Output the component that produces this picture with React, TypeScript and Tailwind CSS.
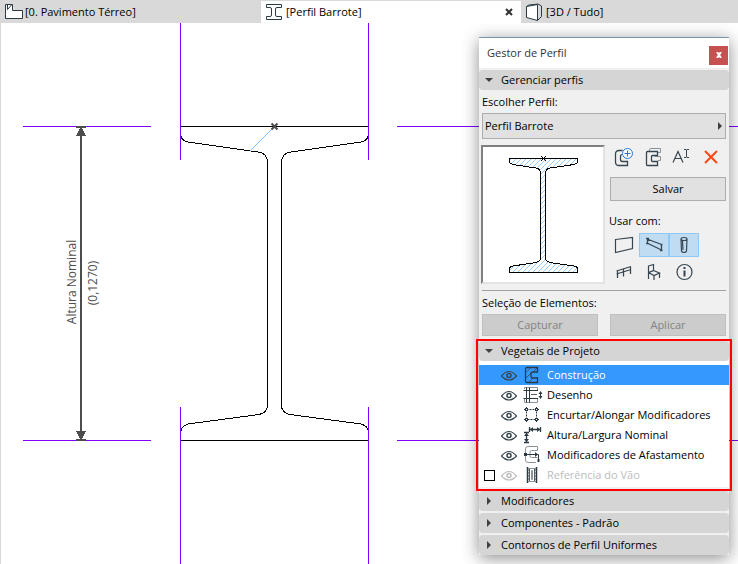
import { useState } from "react";
import type { ReactNode } from "react";

const BEAM =
  "M180.5 126.5H368.5V134Q368 141 361 142L291 152Q281.5 153 281.5 163V405Q281.5 413 290 414.5L361 424Q368.5 426 368.5 433V440.5H180.5V433Q181 426 188 424L259 414.5Q267.5 413 267.5 405V163Q267.5 153 258 152L188 142Q181 141 180.5 134Z";

function Drawing() {
  return (
    <svg className="absolute inset-0 h-full w-full" fill="none">
      {/* drawn in window coordinates, below the tab bar and the left border */}
      <g transform="translate(-1 -23)">
        <g shapeRendering="crispEdges">
          <path d={BEAM} stroke="#000" />
          <path d="M274 127L250 151" stroke="#80c0ff" />
          <path
            d="M23 126.5H151M397 126.5H738M23 440.5H151M397 440.5H738M180.5 23V160M368.5 23V160M180.5 407V2000M368.5 407V2000"
            stroke="#7f00ff"
          />
          <path d="M81 127V440" stroke="#4d4d4d" strokeWidth="2" />
          <path d="M76 127H86M76 440H86" stroke="#4d4d4d" strokeWidth="2" />
          <path d="M81 126L86 136H76ZM81 441L86 431H76Z" fill="#4d4d4d" />
        </g>
        <path d="M271.5 123.5l6 6m0-6l-6 6" stroke="#4d4d4d" strokeWidth="2" />
        <g fill="#4d4d4d" fontSize="12" textAnchor="middle">
          <text transform="translate(76 282) rotate(-90)">Altura Nominal</text>
          <text transform="translate(97 283) rotate(-90)">(0,1270)</text>
        </g>
      </g>
    </svg>
  );
}

function Triangle({ open }: { open: boolean }) {
  return (
    <svg className="h-2 w-2" fill="#404040" viewBox="0 0 8 8">
      {open ? <path d="M0 2h8L4 6z" /> : <path d="M2 0l4 4-4 4z" />}
    </svg>
  );
}

function SectionHeader({
  title,
  open = false,
}: {
  title: string;
  open?: boolean;
}) {
  return (
    <button
      aria-expanded={open}
      className="flex h-5 w-full items-center gap-2 rounded-sm bg-[#d5d5d5] pl-1.5 text-left"
      type="button"
    >
      <Triangle open={open} />
      <span>{title}</span>
    </button>
  );
}

function Tab({
  icon,
  label,
  active = false,
  className,
}: {
  icon: ReactNode;
  label: string;
  active?: boolean;
  className: string;
}) {
  return (
    <button
      aria-selected={active}
      className={`flex items-center gap-px pl-1 text-left ${className} ${
        active ? "bg-white" : "bg-[#d9d9d9]"
      }`}
      role="tab"
      type="button"
    >
      <svg
        className="h-5 w-5 shrink-0"
        fill="none"
        stroke="#2a3a44"
        viewBox="0 0 20 20"
      >
        {icon}
      </svg>
      <span>{label}</span>
    </button>
  );
}

function Tabs() {
  return (
    <div
      className="flex h-[23px] shrink-0 border-t border-[#d9d9d9] bg-[#d9d9d9]"
      role="tablist"
    >
      <Tab
        className="w-[261px]"
        icon={
          <>
            <path d="M1.5 2.5H8.5V8.5H18.5V16.5H1.5Z" fill="#fff" />
            <path d="M3.5 3v4.5l4-4.5" />
          </>
        }
        label="[0. Pavimento Térreo]"
      />
      <div className="flex w-[260px] bg-white">
        <Tab
          active
          className="grow"
          icon={
            <path
              d="M1.5 2.5H16.5V5.5H12Q10.5 5.5 10.5 7V13Q10.5 14.5 12 14.5H16.5V17.5H1.5V14.5H5Q6.5 14.5 6.5 13V7Q6.5 5.5 5 5.5H1.5Z"
              fill="#fff"
            />
          }
          label="[Perfil Barrote]"
        />
        <button
          aria-label="Fechar"
          className="flex w-6 items-center justify-center"
          type="button"
        >
          <svg className="h-2 w-2" stroke="#333" strokeWidth="2">
            <path d="M1 1l6 6M7 1L1 7" />
          </svg>
        </button>
      </div>
      <Tab
        className="grow"
        icon={
          <>
            <path d="M1.5 4.5L12.5 2.5V18.5L1.5 15.5Z" fill="#fff" />
            <path d="M1.5 4.5L4 3L13 2L16.5 4V14.5L12.5 18.5" />
          </>
        }
        label="[3D / Tudo]"
      />
    </div>
  );
}

function Preview() {
  return (
    <div className="-ml-px h-[139px] w-[124px] border-2 border-t-[#808080] border-r-[#e3e3e3] border-b-[#e3e3e3] border-l-[#808080] bg-white">
      <svg
        className="h-full w-full"
        shapeRendering="crispEdges"
        viewBox="483 147 120 135"
      >
        <defs>
          <pattern
            height="5"
            id="hatch"
            patternUnits="userSpaceOnUse"
            width="5"
          >
            <path d="M-1 6L6 -1M-1 1L1 -1M4 6L6 4" stroke="#99ccff" />
          </pattern>
        </defs>
        <path
          d="M509.5 158.5H577.5V162Q577 164 574 164.5L550 168Q545.5 169 545.5 173V258Q545.5 261 550 262.5L574 266Q577 266 577.5 269V272.5H509.5V269Q510 266 513 266L536 262.5Q540.5 261 540.5 258V173Q540.5 169 536 168L513 164.5Q510 164 509.5 162Z"
          fill="url(#hatch)"
          stroke="#000"
        />
        <path d="M541 156l5 5M546 156l-5 5" stroke="#000" />
      </svg>
    </div>
  );
}

function ToolButton({
  label,
  pressed,
  children,
}: {
  label: string;
  pressed?: boolean;
  children: ReactNode;
}) {
  return (
    <button
      aria-label={label}
      aria-pressed={pressed}
      className={`flex h-6 items-center justify-center ${
        pressed ? "border border-[#90c8f6] bg-[#c0dcf3]" : ""
      }`}
      type="button"
    >
      <svg
        className="h-5 w-5 shrink-0"
        fill="none"
        stroke="#36454f"
        viewBox="0 0 20 20"
      >
        {children}
      </svg>
    </button>
  );
}

function ProfileTools() {
  return (
    <div className="flex w-[116px] flex-col">
      <div className="-ml-px grid grid-cols-4">
        <ToolButton label="Novo">
          <path
            d="M8.5 3.5H5Q1.5 3.5 1.5 7V15Q1.5 18.5 5 18.5H13.5V14.5H8.5Q6.5 14.5 6.5 12.5V9Q6.5 8 8 7.5"
            strokeWidth="1.3"
          />
          <circle cx="13.5" cy="6.5" fill="#fff" r="5" stroke="#1e7be0" />
          <path d="M13.5 3.5v6M10.5 6.5h6" stroke="#1e7be0" />
        </ToolButton>
        <ToolButton label="Duplicar">
          <path
            d="M6.5 4V2.5Q6.500 1.5 7.5 1.5H17.5V5.5H15M15 13.5H17.5V9.5H12V8.500"
            stroke="#8a9298"
          />
          <path
            d="M4.5 4.5H14.5V8.5H9.5Q8.5 8.5 8.5 9.5V13.5Q8.5 14.5 9.5 14.5H14.5V18.5H4.5Q3.5 18.5 3.5 17.5V5.5Q3.5 4.5 4.5 4.5Z"
            strokeWidth="1.3"
          />
        </ToolButton>
        <ToolButton label="Renomear">
          <path d="M1 15.5L6 4.5L11 15.5M3 11.5H9" strokeWidth="1.2" />
          <path d="M12 2.5H14L14.5 3L15 2.5H17M14.5 3V10M12 10.5H14L14.5 10L15 10.5H17" />
        </ToolButton>
        <ToolButton label="Apagar">
          <path d="M4 4L16 16M16 4L4 16" stroke="#fa4616" strokeWidth="2" />
        </ToolButton>
      </div>
      <button
        className="mt-2 h-6 border border-[#adadad] bg-[#e1e1e1]"
        type="button"
      >
        Salvar
      </button>
      <div className="-ml-px flex h-8 items-center pt-2">Usar com:</div>
      <div className="-ml-px grid grid-cols-[30px_30px_30px] gap-y-[3px]">
        <ToolButton label="Parede">
          <path
            d="M1.5 4.5L18.5 2.5V13.5L1.5 17.5Z"
            strokeWidth="1.2"
          />
        </ToolButton>
        <ToolButton label="Viga" pressed>
          <path
            d="M3 4L17.5 9.5M3 8L17.5 15M3.5 3.5V9M17.5 9V16M2 3.5H5M2 8.5H4M16 9.500H18.5M16 15.5H18.5"
            strokeWidth="1.3"
          />
        </ToolButton>
        <ToolButton label="Pilar" pressed>
          <path
            d="M7 4L7.5 16Q8 17.5 10 17.5T12.5 16L13 4M7 4Q7 2.5 10 2.5T13 4T10 5.5T7 4ZM8.5 6L9 15"
            strokeWidth="1.2"
          />
        </ToolButton>
        <ToolButton label="Guarda-corpo">
          <path
            d="M2.500 9L17 4.5M2.500 12L17 7.5M3.5 8.500V16M9.5 6.5V14.5M16.5 4.5V12"
            strokeWidth="1.3"
          />
        </ToolButton>
        <ToolButton label="Objeto">
          <path
            d="M4.5 4L9.5 2.5V8.5L4.5 10.5ZM4.5 10.5V17M4.5 10.5L10 13.5L15.5 11L9.5 8.5M10 13.5V18M15.5 11V16"
            strokeWidth="1.2"
          />
        </ToolButton>
        <ToolButton label="Informação">
          <circle cx="10.5" cy="10" r="7.5" strokeWidth="1.2" />
          <path d="M10.5 8.5V14.5M10.5 5V7" strokeWidth="2" />
        </ToolButton>
      </div>
    </div>
  );
}

const layers = [
  {
    name: "Construção",
    icon: (
      <>
        <path
          d="M4 1.5H14.5V6H9.5Q8 6 8 7.5V10.5Q8 12 9.5 12H14.5V16.5H4Q2.5 16.5 2.5 15V3Q2.5 1.5 4 1.5Z"
          strokeWidth="1.3"
        />
        <path
          d="M3 6.5L7.5 2M3 12L8 7M6 16L10 12M10.5 5.5L14 2"
          strokeWidth=".7"
        />
      </>
    ),
  },
  {
    name: "Desenho",
    icon: (
      <>
        <path
          d="M1.5 3V1.5H14.5V4M1.5 13V16.5H14.5V12.5"
          stroke="#8a9298"
        />
        <path d="M.5 4.5H15M.5 12.5H15M3.5 1.5V16.5M6.5 1.5V16.5" />
        <path d="M17.5 6V12" />
        <path
          d="M17.5 5L19.5 8H15.5ZM17.5 13L19.5 10H15.5Z"
          fill="#2b3942"
          stroke="none"
        />
        <path d="M8 9l1-1 1 1 1-1 1 1 1-1 1 1" strokeWidth=".8" />
      </>
    ),
  },
  {
    name: "Encurtar/Alongar Modificadores",
    icon: (
      <>
        <path d="M3.5 3.5H13.5V13.5H3.5Z" strokeDasharray="2 1" />
        <path d="M2 2h3v3H2zM12 2h3v3h-3zM2 12h3v3H2zM12 12h3v3h-3z" fill="#2b3942" stroke="none" />
        <path d="M3 3h1v1H3zM13 3h1v1h-1zM3 13h1v1H3zM13 13h1v1h-1z" fill="#fff" stroke="none" />
        <path d="M1 3.500h1M3.500 1v1M15 3.500h1M13.500 1v1M1 13.500h1M3.500 15v1M15 13.500h1M13.500 15v1" />
      </>
    ),
  },
  {
    name: "Altura/Largura Nominal",
    icon: (
      <>
        <path
          d="M1 6.5H6M1 16.5H6M3.5 7V16M6.5 1V6M17.5 1V6M7 3.5H17"
          strokeWidth="1.3"
        />
        <path
          d="M3.5 7L6 10H1ZM3.5 16L6 13H1ZM7 3.5L10 1V6ZM17 3.5L14 1V6Z"
          fill="#2b3942"
          stroke="none"
        />
      </>
    ),
  },
  {
    name: "Modificadores de Afastamento",
    icon: (
      <>
        <path
          d="M2.5 7V3Q2.5 .5 5 .5H14.5V4.5H8.5Q7 4.5 7 6V10Q7 11.5 8.5 11.5H14.5M2.5 9.5V14Q2.5 16.5 5 16.5H13"
          stroke="#8a9298"
        />
        <path d="M2 8.5H15.5M15.5 8.5V15" />
        <path
          d="M1 7h3v3H1zM12 6L15 8.5L12 11ZM14.5 13h2v3h-2z"
          fill="#2b3942"
          stroke="none"
        />
      </>
    ),
  },
  {
    name: "Referência do Vão",
    icon: (
      <>
        <path d="M4.5 1V17M13.5 1V17" strokeWidth="1.5" />
        <path d="M6.5 2V16M11.5 2V16" strokeWidth=".8" />
        <path
          d="M8.5 4.5H9.5V13.5H8.5ZM5 2.5H13M5 15.5H13"
          stroke="#8a9298"
        />
        <path
          d="M4.5 5l2-2M4.5 8l2-2M4.5 11l2-2M4.5 14l2-2M11.5 5l2-2M11.5 8l2-2M11.5 11l2-2M11.5 14l2-2"
          strokeWidth=".8"
        />
      </>
    ),
  },
];

function LayerList() {
  const [selected, setSelected] = useState(0);
  const [spanShown, setSpanShown] = useState(false);

  return (
    <ul className="bg-white pt-1 pb-0.5">
      {layers.map((layer, i) => {
        const optional = i === layers.length - 1;
        const dim = optional && !spanShown;
        return (
          <li
            className={`flex h-5 items-center ${
              i === selected ? "bg-[#3399ff] text-white" : ""
            } ${dim ? "text-[#bcbcbc]" : ""}`}
            key={layer.name}
          >
            <span className="flex w-[22px] shrink-0 pl-[5px]">
              {optional ? (
                <input
                  aria-label={layer.name}
                  checked={spanShown}
                  className="h-[11px] w-[11px] appearance-none border border-black bg-white checked:bg-black"
                  onChange={() => setSpanShown(!spanShown)}
                  type="checkbox"
                />
              ) : null}
            </span>
            <button
              className="flex h-full grow items-center text-left"
              onClick={() => setSelected(i)}
              type="button"
            >
              <svg
                className="h-[18px] w-4 shrink-0"
                fill="none"
                stroke={dim ? "#bcbcbc" : "#36454f"}
                viewBox="0 0 16 18"
              >
                <path
                  d="M.5 10Q8 1 15.5 10Q8 18 .5 10Z"
                  strokeWidth="1.2"
                />
                <circle cx="8" cy="9.5" r="2" strokeWidth="1.5" />
              </svg>
              <svg
                className="mr-1 ml-1.5 h-[18px] w-5 shrink-0"
                fill="none"
                stroke="#2b3942"
                viewBox="0 0 20 18"
              >
                {layer.icon}
              </svg>
              <span>{layer.name}</span>
            </button>
          </li>
        );
      })}
    </ul>
  );
}

function ProfileManager() {
  return (
    <aside className="absolute top-[14px] right-[9px] w-[250px] border-t border-[#7b93a8] bg-[#f0f0f0] shadow-[0_3px_16px_rgba(0,0,0,0.45)]">
      <div className="mb-0.5 flex h-[30px] items-center justify-between bg-white pr-px pl-2 text-[#333]">
        <h1>Gestor de Perfil</h1>
        <button
          aria-label="Fechar"
          className="mt-1 flex h-[19px] w-[19px] items-center justify-center bg-[#c75050]"
          type="button"
        >
          <svg className="h-1.5 w-1.5" stroke="#fff" strokeWidth="2">
            <path d="M1 0l4 6M5 0L1 6" />
          </svg>
        </button>
      </div>
      <SectionHeader open title="Gerenciar perfis" />
      <div className="px-[3px]">
        <label className="flex h-[23px] items-center" htmlFor="profile">
          Escolher Perfil:
        </label>
        <div className="relative">
          <select
            className="h-[26px] w-full appearance-none border border-[#adadad] bg-[#e1e1e1] px-0.5"
            id="profile"
          >
            <option>Perfil Barrote</option>
          </select>
          <span className="pointer-events-none absolute inset-y-0 right-0.5 flex items-center">
            <Triangle open={false} />
          </span>
        </div>
        <div className="mt-1.5 flex justify-between">
          <Preview />
          <ProfileTools />
        </div>
        <hr className="mt-1.5 border-[#a0a0a0]" />
        <div className="flex h-[23px] items-center">Seleção de Elementos:</div>
        <div className="mb-[5px] grid grid-cols-2 gap-3 text-[#838383]">
          <button
            className="h-[22px] border border-[#bfbfbf] bg-[#cccccc]"
            type="button"
          >
            Capturar
          </button>
          <button
            className="h-[22px] border border-[#bfbfbf] bg-[#cccccc]"
            type="button"
          >
            Aplicar
          </button>
        </div>
      </div>
      <div className="relative">
        <SectionHeader open title="Vegetais de Projeto" />
        <LayerList />
        <div className="pointer-events-none absolute -inset-x-[3px] -top-0.5 -bottom-1 border-2 border-[#ff0000]" />
      </div>
      <div className="mt-1 flex flex-col gap-0.5">
        <SectionHeader title="Modificadores" />
        <SectionHeader title="Componentes - Padrão" />
        <SectionHeader title="Contornos de Perfil Uniformes" />
      </div>
    </aside>
  );
}

export default function App() {
  return (
    <div className="flex min-h-screen flex-col bg-white font-['Open_Sans',sans-serif] text-[11px] leading-4 text-black">
      <Tabs />
      <main className="relative min-h-[541px] grow overflow-hidden border-l border-[#d9d9d9]">
        <Drawing />
        <ProfileManager />
      </main>
    </div>
  );
}
